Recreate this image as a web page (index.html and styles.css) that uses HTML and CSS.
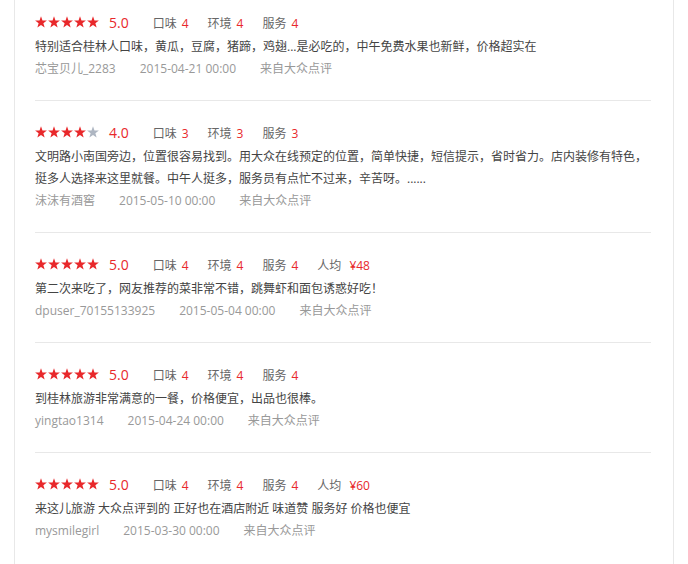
FILE: index.html
```html
<!DOCTYPE html>
<html lang="zh-CN">
<head>
    <meta charset="UTF-8">
    <meta name="viewport" content="width=device-width, initial-scale=1.0">
    <title>点评</title>
    <link rel="stylesheet" href="styles.css">
</head>
<body>
    <svg width="0" height="0" class="defs">
        <symbol id="star" viewBox="0 0 12 12">
            <polygon points="6,0.3 7.47,4.48 11.9,4.58 8.38,7.27 9.64,11.52 6,9 2.36,11.52 3.62,7.27 0.1,4.58 4.53,4.48"/>
        </symbol>
    </svg>

    <div class="review-list">
        <div class="review">
            <div class="rating">
                <span class="stars">
                    <svg class="star"><use href="#star"/></svg><svg class="star"><use href="#star"/></svg><svg class="star"><use href="#star"/></svg><svg class="star"><use href="#star"/></svg><svg class="star"><use href="#star"/></svg>
                </span>
                <span class="score">5.0</span>
                <span class="item">口味<em>4</em></span>
                <span class="item">环境<em>4</em></span>
                <span class="item">服务<em>4</em></span>
            </div>
            <p class="content">特别适合桂林人口味，黄瓜，豆腐，猪蹄，鸡翅...是必吃的，中午免费水果也新鲜，价格超实在</p>
            <div class="meta">
                <span>芯宝贝儿_2283</span>
                <span>2015-04-21 00:00</span>
                <span>来自大众点评</span>
            </div>
        </div>

        <div class="review">
            <div class="rating">
                <span class="stars">
                    <svg class="star"><use href="#star"/></svg><svg class="star"><use href="#star"/></svg><svg class="star"><use href="#star"/></svg><svg class="star"><use href="#star"/></svg><svg class="star off"><use href="#star"/></svg>
                </span>
                <span class="score">4.0</span>
                <span class="item">口味<em>3</em></span>
                <span class="item">环境<em>3</em></span>
                <span class="item">服务<em>3</em></span>
            </div>
            <p class="content">文明路小南国旁边，位置很容易找到。用大众在线预定的位置，简单快捷，短信提示，省时省力。店内装修有特色，挺多人选择来这里就餐。中午人挺多，服务员有点忙不过来，辛苦呀。......</p>
            <div class="meta">
                <span>沫沫有酒窖</span>
                <span>2015-05-10 00:00</span>
                <span>来自大众点评</span>
            </div>
        </div>

        <div class="review">
            <div class="rating">
                <span class="stars">
                    <svg class="star"><use href="#star"/></svg><svg class="star"><use href="#star"/></svg><svg class="star"><use href="#star"/></svg><svg class="star"><use href="#star"/></svg><svg class="star"><use href="#star"/></svg>
                </span>
                <span class="score">5.0</span>
                <span class="item">口味<em>4</em></span>
                <span class="item">环境<em>4</em></span>
                <span class="item">服务<em>4</em></span>
                <span class="item">人均<em class="price">¥48</em></span>
            </div>
            <p class="content">第二次来吃了，网友推荐的菜非常不错，跳舞虾和面包诱惑好吃！</p>
            <div class="meta">
                <span>dpuser_70155133925</span>
                <span>2015-05-04 00:00</span>
                <span>来自大众点评</span>
            </div>
        </div>

        <div class="review">
            <div class="rating">
                <span class="stars">
                    <svg class="star"><use href="#star"/></svg><svg class="star"><use href="#star"/></svg><svg class="star"><use href="#star"/></svg><svg class="star"><use href="#star"/></svg><svg class="star"><use href="#star"/></svg>
                </span>
                <span class="score">5.0</span>
                <span class="item">口味<em>4</em></span>
                <span class="item">环境<em>4</em></span>
                <span class="item">服务<em>4</em></span>
            </div>
            <p class="content">到桂林旅游非常满意的一餐，价格便宜，出品也很棒。</p>
            <div class="meta">
                <span>yingtao1314</span>
                <span>2015-04-24 00:00</span>
                <span>来自大众点评</span>
            </div>
        </div>

        <div class="review">
            <div class="rating">
                <span class="stars">
                    <svg class="star"><use href="#star"/></svg><svg class="star"><use href="#star"/></svg><svg class="star"><use href="#star"/></svg><svg class="star"><use href="#star"/></svg><svg class="star"><use href="#star"/></svg>
                </span>
                <span class="score">5.0</span>
                <span class="item">口味<em>4</em></span>
                <span class="item">环境<em>4</em></span>
                <span class="item">服务<em>4</em></span>
                <span class="item">人均<em class="price">¥60</em></span>
            </div>
            <p class="content">来这儿旅游 大众点评到的 正好也在酒店附近 味道赞 服务好 价格也便宜</p>
            <div class="meta">
                <span>mysmilegirl</span>
                <span>2015-03-30 00:00</span>
                <span>来自大众点评</span>
            </div>
        </div>
    </div>
</body>
</html>
```

FILE: styles.css
```css
:root {
    --red: #e8282b;
    --text-color: #444;
    --label-color: #666;
    --meta-color: #999;
    --border-color: #e8e8e8;
}

body {
    margin: 0;
    background: #fff;
    font-family: "Open Sans", "Noto Sans CJK SC", sans-serif;
    font-size: 12px;
    color: var(--text-color);
}

.defs {
    position: absolute;
}

.review-list {
    width: 660px;
    margin-left: 14px;
    box-sizing: border-box;
    border-left: 1px solid var(--border-color);
    border-right: 1px solid var(--border-color);
    padding: 0 22px 0 20px;
    min-height: 564px;
}

.review {
    padding: 19px 0 20px;
    border-bottom: 1px solid var(--border-color);
}

.review:first-child {
    padding-top: 10px;
}

.review:last-child {
    border-bottom: none;
}

.rating {
    display: flex;
    align-items: center;
    height: 24px;
}

.stars {
    display: flex;
    gap: 1px;
}

.star {
    width: 12px;
    height: 12px;
    fill: var(--red);
}

.star.off {
    fill: #aeb6c2;
}

.score {
    margin-left: 10px;
    margin-right: 24px;
    font-size: 14px;
    color: var(--red);
}

.item {
    margin-right: 19px;
    color: var(--label-color);
    line-height: 24px;
    padding-top: 4px;
}

.item em {
    font-style: normal;
    color: var(--red);
    margin-left: 5px;
}

.item em.price {
    margin-left: 8px;
}

.content {
    margin: 2px 0 0;
    line-height: 22px;
}

.meta {
    display: flex;
    gap: 24px;
    line-height: 22px;
    color: var(--meta-color);
}
```
